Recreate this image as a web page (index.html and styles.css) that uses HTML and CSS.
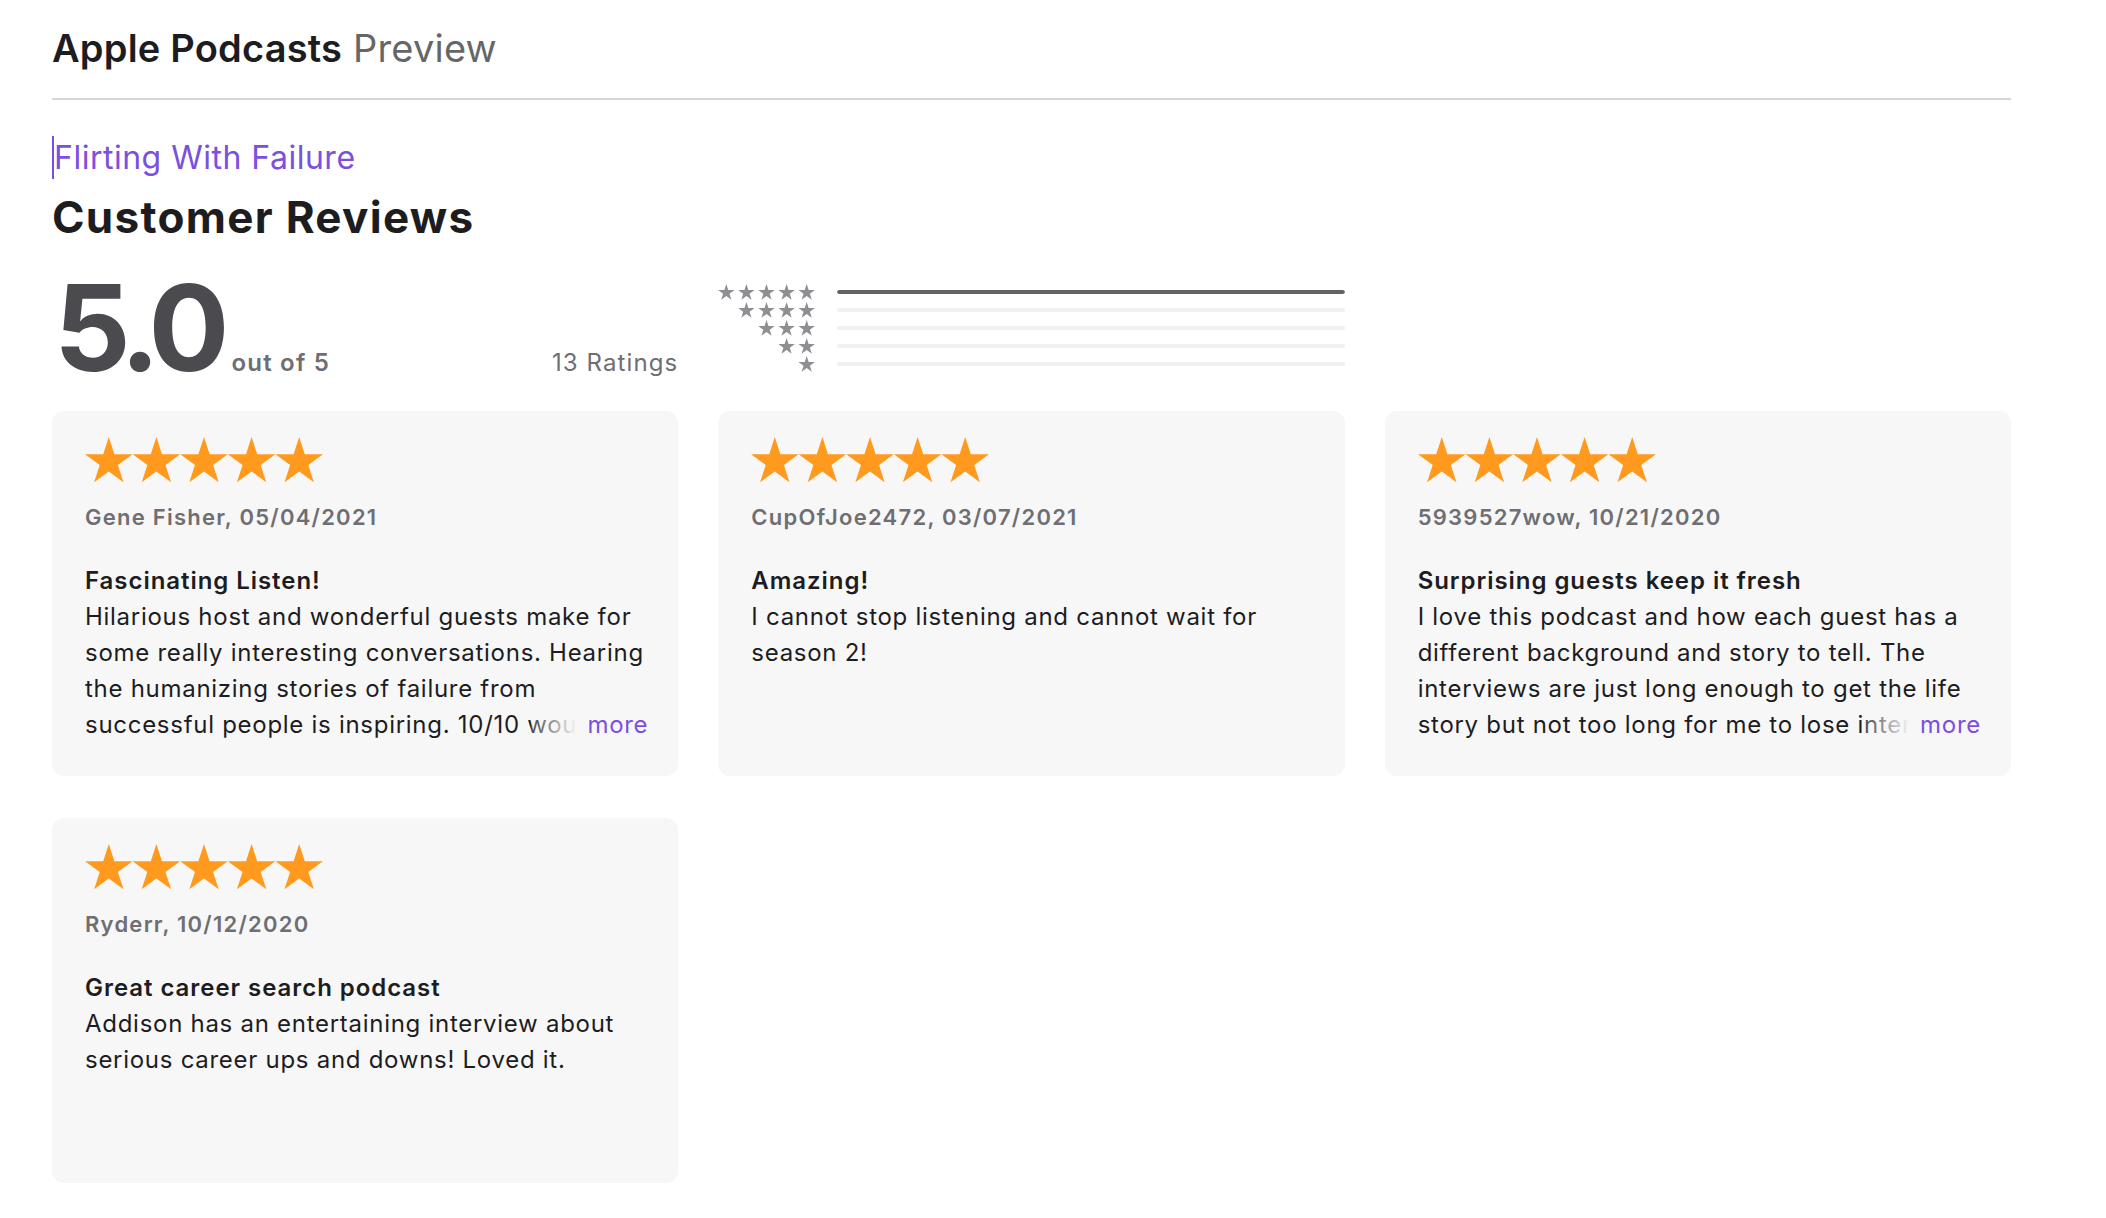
FILE: index.html
```html
<!DOCTYPE html>
<html lang="en">
<head>
<meta charset="utf-8">
<title>Flirting With Failure - Customer Reviews</title>
<link rel="stylesheet" href="styles.css">
</head>
<body>
<svg class="defs" width="0" height="0" aria-hidden="true">
  <defs>
    <symbol id="star" viewBox="0 0 47.6 46">
      <polygon points="23.8,0 29.41,17.27 47.58,17.27 32.88,27.95 38.49,45.23 23.8,34.55 9.11,45.23 14.72,27.95 0.02,17.27 18.19,17.27"/>
    </symbol>
  </defs>
</svg>
<div class="page">
  <header class="top">
    <span class="brand">Apple Podcasts</span> <span class="brand-sub">Preview</span>
  </header>
  <div class="rule"></div>

  <div class="show"><a class="show-link" href="#">Flirting With Failure</a></div>
  <h2 class="section-title">Customer Reviews</h2>

  <div class="ratings">
    <div class="avg">
      <span class="avg-num">5.0</span>
      <span class="avg-out">out of 5</span>
      <span class="avg-count">13 Ratings</span>
    </div>
    <div class="hist">
      <div class="hist-row">
        <svg class="hist-stars" viewBox="0 0 97 16"><use href="#star" x="0" width="16.6" height="16"/><use href="#star" x="20.1" width="16.6" height="16"/><use href="#star" x="40.2" width="16.6" height="16"/><use href="#star" x="60.3" width="16.6" height="16"/><use href="#star" x="80.4" width="16.6" height="16"/></svg>
        <div class="bar"><div class="bar-fill" style="width:100%"></div></div>
      </div>
      <div class="hist-row">
        <svg class="hist-stars" viewBox="0 0 97 16"><use href="#star" x="20.1" width="16.6" height="16"/><use href="#star" x="40.2" width="16.6" height="16"/><use href="#star" x="60.3" width="16.6" height="16"/><use href="#star" x="80.4" width="16.6" height="16"/></svg>
        <div class="bar"><div class="bar-fill" style="width:0%"></div></div>
      </div>
      <div class="hist-row">
        <svg class="hist-stars" viewBox="0 0 97 16"><use href="#star" x="40.2" width="16.6" height="16"/><use href="#star" x="60.3" width="16.6" height="16"/><use href="#star" x="80.4" width="16.6" height="16"/></svg>
        <div class="bar"><div class="bar-fill" style="width:0%"></div></div>
      </div>
      <div class="hist-row">
        <svg class="hist-stars" viewBox="0 0 97 16"><use href="#star" x="60.3" width="16.6" height="16"/><use href="#star" x="80.4" width="16.6" height="16"/></svg>
        <div class="bar"><div class="bar-fill" style="width:0%"></div></div>
      </div>
      <div class="hist-row">
        <svg class="hist-stars" viewBox="0 0 97 16"><use href="#star" x="80.4" width="16.6" height="16"/></svg>
        <div class="bar"><div class="bar-fill" style="width:0%"></div></div>
      </div>
    </div>
  </div>

  <div class="reviews">
    <article class="card">
      <svg class="card-stars" viewBox="0 0 238 46"><use href="#star" x="0" width="47.6" height="46"/><use href="#star" x="47.6" width="47.6" height="46"/><use href="#star" x="95.2" width="47.6" height="46"/><use href="#star" x="142.8" width="47.6" height="46"/><use href="#star" x="190.4" width="47.6" height="46"/></svg>
      <div class="author">Gene Fisher, 05/04/2021</div>
      <h3 class="rev-title">Fascinating Listen!</h3>
      <div class="rev-body">
        <p class="rev-text">Hilarious host and wonderful guests make for some really interesting conversations. Hearing the humanizing stories of failure from successful people is inspiring. 10/10 would recommend to anyone looking for a good laugh and some perspective.</p>
        <a class="more" href="#">more</a>
      </div>
    </article>
    <article class="card">
      <svg class="card-stars" viewBox="0 0 238 46"><use href="#star" x="0" width="47.6" height="46"/><use href="#star" x="47.6" width="47.6" height="46"/><use href="#star" x="95.2" width="47.6" height="46"/><use href="#star" x="142.8" width="47.6" height="46"/><use href="#star" x="190.4" width="47.6" height="46"/></svg>
      <div class="author">CupOfJoe2472, 03/07/2021</div>
      <h3 class="rev-title">Amazing!</h3>
      <div class="rev-body">
        <p class="rev-text">I cannot stop listening and cannot wait for season 2!</p>
      </div>
    </article>
    <article class="card">
      <svg class="card-stars" viewBox="0 0 238 46"><use href="#star" x="0" width="47.6" height="46"/><use href="#star" x="47.6" width="47.6" height="46"/><use href="#star" x="95.2" width="47.6" height="46"/><use href="#star" x="142.8" width="47.6" height="46"/><use href="#star" x="190.4" width="47.6" height="46"/></svg>
      <div class="author">5939527wow, 10/21/2020</div>
      <h3 class="rev-title">Surprising guests keep it fresh</h3>
      <div class="rev-body">
        <p class="rev-text">I love this podcast and how each guest has a different background and story to tell. The interviews are just long enough to get the life story but not too long for me to lose interest. Highly recommend giving it a listen.</p>
        <a class="more" href="#">more</a>
      </div>
    </article>
    <article class="card">
      <svg class="card-stars" viewBox="0 0 238 46"><use href="#star" x="0" width="47.6" height="46"/><use href="#star" x="47.6" width="47.6" height="46"/><use href="#star" x="95.2" width="47.6" height="46"/><use href="#star" x="142.8" width="47.6" height="46"/><use href="#star" x="190.4" width="47.6" height="46"/></svg>
      <div class="author">Ryderr, 10/12/2020</div>
      <h3 class="rev-title">Great career search podcast</h3>
      <div class="rev-body">
        <p class="rev-text">Addison has an entertaining interview about serious career ups and downs! Loved it.</p>
      </div>
    </article>
  </div>
</div>
</body>
</html>
```

FILE: styles.css
```css
* { box-sizing: border-box; }

html, body {
  margin: 0;
  padding: 0;
  background: #ffffff;
}

body {
  font-family: Inter, "Noto Sans", "Liberation Sans", sans-serif;
  color: #1d1d1f;
  -webkit-font-smoothing: antialiased;
}

.defs {
  position: absolute;
  width: 0;
  height: 0;
  overflow: hidden;
}

.page {
  width: 2011px;
  padding-left: 52px;
}

/* header */
.top {
  padding-top: 25px;
  font-size: 38px;
  line-height: 46px;
  letter-spacing: 0.2px;
  white-space: nowrap;
}

.brand {
  font-weight: 600;
  color: #1d1d1f;
}

.brand-sub {
  font-weight: 400;
  color: #666666;
}

.rule {
  margin-top: 27px;
  height: 2px;
  background: #d6d6d6;
}

/* show link */
.show {
  margin-top: 36px;
  font-size: 32px;
  line-height: 43px;
}

.show-link {
  display: inline-block;
  color: #7b4fe0;
  text-decoration: none;
  border-left: 2px solid #7b4fe0;
  letter-spacing: 0.5px;
}

.section-title {
  margin: 12px 0 0;
  font-size: 44px;
  line-height: 52px;
  font-weight: 700;
  letter-spacing: 1.3px;
  color: #1d1d1f;
}

/* ratings summary */
.ratings {
  margin-top: 25px;
  display: grid;
  grid-template-columns: repeat(3, 1fr);
  column-gap: 40px;
  height: 120px;
}

.avg {
  display: flex;
  align-items: baseline;
  white-space: nowrap;
}

.avg-num {
  font-size: 120px;
  line-height: 120px;
  font-weight: 700;
  letter-spacing: -8px;
  color: #4a4a4f;
  margin-left: 2px;
}

.avg-out {
  margin-left: 10px;
  font-size: 24px;
  line-height: 30px;
  font-weight: 600;
  letter-spacing: 1.2px;
  color: #6e6e73;
}

.avg-count {
  margin-left: auto;
  font-size: 24px;
  line-height: 30px;
  font-weight: 400;
  letter-spacing: 1.1px;
  color: #6e6e73;
}

.hist {
  padding-top: 15px;
  display: flex;
  flex-direction: column;
}

.hist-row {
  height: 18px;
  display: flex;
  align-items: center;
  gap: 22px;
}

.hist-stars {
  width: 97px;
  height: 16px;
  flex: none;
  fill: #8e8e93;
}

.bar {
  flex: 1;
  height: 4px;
  border-radius: 2px;
  background: #efeff4;
  overflow: hidden;
}

.bar-fill {
  height: 100%;
  background: #636366;
  border-radius: 2px;
}

/* review cards */
.reviews {
  margin-top: 23px;
  display: grid;
  grid-template-columns: repeat(3, 1fr);
  grid-auto-rows: 1fr;
  column-gap: 40px;
  row-gap: 42px;
}

.card {
  background: #f7f7f7;
  border-radius: 12px;
  padding: 26px 30px 33px 33px;
}

.card-stars {
  display: block;
  width: 238px;
  height: 46px;
  fill: #ff9a1f;
}

.author {
  margin-top: 20px;
  font-size: 22px;
  line-height: 28px;
  font-weight: 600;
  letter-spacing: 1.25px;
  color: #6e6e73;
  white-space: nowrap;
}

.rev-title {
  margin: 32px 0 0;
  font-size: 24px;
  line-height: 36px;
  font-weight: 600;
  letter-spacing: 0.95px;
  color: #1d1d1f;
}

.rev-body {
  position: relative;
}

.rev-text {
  margin: 0;
  font-size: 24px;
  line-height: 36px;
  letter-spacing: 0.72px;
  max-height: 144px;
  overflow: hidden;
  color: #1d1d1f;
}

.more {
  position: absolute;
  right: 0;
  bottom: 0;
  padding-left: 56px;
  font-size: 24px;
  line-height: 36px;
  letter-spacing: 0.72px;
  color: #7b4fe0;
  text-decoration: none;
  background: linear-gradient(90deg, rgba(247, 247, 247, 0.2) 0, #f7f7f7 46px);
}
```
